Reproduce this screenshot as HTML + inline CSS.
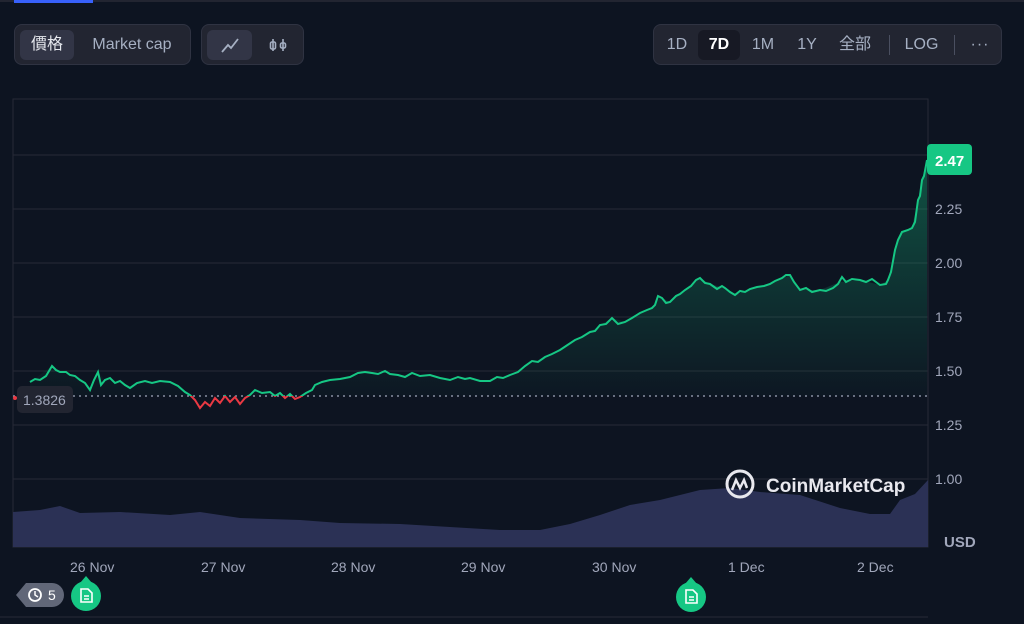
<!DOCTYPE html>
<html><head><meta charset="utf-8"><style>
body{margin:0;width:1024px;height:624px;background:#0d1421;font-family:"Liberation Sans","Noto Sans CJK JP",sans-serif;overflow:hidden;position:relative;color:#a1a7bb}
.grp{position:absolute;top:24px;height:41px;background:#222531;border:1px solid #2f3342;border-radius:8px;box-sizing:border-box}
.b{position:absolute;top:5px;height:30px;line-height:30px;font-size:16px;color:#a6b0c3;border-radius:6px;text-align:center}
.on{background:#323546;color:#e6e8ee}
.on2{background:#171924;color:#fff;font-weight:bold}
.sep{position:absolute;top:10px;width:1px;height:20px;background:#4a4f60}
</style></head><body>
<div style="position:absolute;left:0;top:0;width:1024px;height:2px;background:#222531"></div>
<div style="position:absolute;left:14px;top:0;width:79px;height:3px;background:#3861fb"></div>
<div class="grp" style="left:14px;width:177px"><div class="b on" style="left:5px;width:54px">價格</div><div class="b" style="left:62px;width:110px">Market cap</div></div>
<div class="grp" style="left:201px;width:103px"><div class="b on" style="left:5px;width:45px"><svg width="26" height="30" viewBox="0 0 26 30"><path d="M5 22l6-7 3 3 7-9" fill="none" stroke="#a6b0c3" stroke-width="1.8"/></svg></div><div class="b" style="left:55px;width:42px"><svg width="22" height="30" viewBox="0 0 22 30"><path d="M6 9v12M16 9v12" stroke="#a6b0c3" stroke-width="1.6"/><rect x="3.5" y="12" width="5" height="7" rx="1.5" fill="none" stroke="#a6b0c3" stroke-width="1.6"/><rect x="13.5" y="13" width="5" height="5" rx="1.5" fill="none" stroke="#a6b0c3" stroke-width="1.6"/></svg></div></div>
<div class="grp" style="left:653px;width:349px">
<div class="b" style="left:4px;width:38px">1D</div>
<div class="b on2" style="left:44px;width:42px">7D</div>
<div class="b" style="left:89px;width:40px">1M</div>
<div class="b" style="left:134px;width:38px">1Y</div>
<div class="b" style="left:176px;width:50px">全部</div>
<div class="sep" style="left:235px"></div>
<div class="b" style="left:240px;width:55px">LOG</div>
<div class="sep" style="left:300px"></div>
<div class="b" style="left:306px;width:40px;letter-spacing:1px">···</div>
</div>

<svg style="position:absolute;left:0;top:0" width="1024" height="624">
<defs>
<linearGradient id="g" x1="0" y1="0" x2="0" y2="1"><stop offset="0" stop-color="#16c784" stop-opacity="0.35"/><stop offset="1" stop-color="#16c784" stop-opacity="0"/></linearGradient>
<clipPath id="up"><rect x="0" y="0" width="1024" height="396"/></clipPath>
<clipPath id="dn"><rect x="0" y="396" width="1024" height="200"/></clipPath>
</defs>
<rect x="13" y="99" width="915" height="448" fill="none" stroke="#262a36"/>
<g stroke="#262a36" stroke-width="1">
<line x1="13" y1="155" x2="928" y2="155"/><line x1="13" y1="209" x2="928" y2="209"/><line x1="13" y1="263" x2="928" y2="263"/><line x1="13" y1="317" x2="928" y2="317"/><line x1="13" y1="371" x2="928" y2="371"/><line x1="13" y1="425" x2="928" y2="425"/><line x1="13" y1="479" x2="928" y2="479"/>
</g>
<path d="M13 512L40 510L60 506L80 513L120 512L170 515L200 512L240 518L300 520L340 523L400 524L450 527L500 530L540 530L570 524L600 515L630 505L660 500L700 490L730 488L760 492L800 495L840 508L870 514L890 514L900 500L915 494L928 480L928 547L13 547Z" fill="#2b3155"/>
<path id="p" d="M30 382L35 379L40 380L46 376L52 366L56 370L60 372L66 372L70 375L75 376L80 380L85 383L90 390L94 380L98 372L101 385L105 380L110 378L115 383L120 381L125 385L130 388L137 383L145 381L152 383L160 381L170 382L178 386L185 392L190 395L195 400L200 408L205 402L210 406L215 398L220 403L225 396L230 402L235 397L240 404L245 398L250 395L255 390L262 393L270 392L275 396L280 393L285 398L290 394L295 399L300 397L306 393L312 390L315 385L322 382L330 380L340 379L350 377L358 373L365 372L372 373L378 374L385 371L390 374L398 375L405 377L412 373L420 376L430 375L440 378L450 380L458 377L465 379L470 378L480 381L490 381L497 377L503 378L510 375L518 372L525 366L532 361L538 362L545 357L552 354L560 350L566 346L575 340L582 337L590 332L595 331L600 325L606 324L612 318L618 324L625 322L632 318L640 313L647 310L652 308L655 305L658 296L662 298L666 303L670 302L676 296L680 294L685 290L691 286L696 280L700 278L705 283L710 284L717 289L722 286L725 288L730 292L735 295L740 291L745 292L750 289L757 287L764 286L770 284L775 281L782 278L786 275L790 275L794 282L800 290L806 288L812 292L820 290L826 291L833 288L838 284L842 277L846 282L852 279L860 280L866 282L872 279L880 285L886 284L888 280L891 272L895 250L898 240L902 232L908 230L912 228L915 222L918 200L920 196L922 180L924 176L927 160" fill="none"/>
<path d="M30 382L52 366L60 372L75 376L90 390L98 372L105 380L120 381L130 388L145 381L170 382L185 392L200 408L215 398L230 402L245 398L255 390L270 392L285 398L300 397L315 385L330 380L350 377L370 372L390 374L410 377L430 375L450 380L470 378L490 381L510 375L525 366L545 357L560 350L575 340L590 332L600 325L612 318L625 322L640 313L655 305L660 297L670 302L685 290L700 278L710 284L725 288L735 295L750 289L770 284L790 275L800 290L820 290L840 282L860 280L880 285L888 280L895 250L902 232L912 228L918 200L922 180L927 160L927 396L30 396Z" fill="url(#g)" clip-path="url(#up)"/>
<line x1="13" y1="396" x2="928" y2="396" stroke="#a1a7bb" stroke-dasharray="2 4" stroke-width="1.3"/>
<use href="#p" stroke="#16c784" stroke-width="2" clip-path="url(#up)"/>
<use href="#p" stroke="#ea3943" stroke-width="2" clip-path="url(#dn)"/>
<circle cx="740" cy="484" r="13" fill="none" stroke="#e8e8ee" stroke-width="3"/>
<path d="M732 490l4-10 4 8 4-8 3 8" fill="none" stroke="#e8e8ee" stroke-width="2.5"/>
<text x="766" y="492" font-family="Liberation Sans,sans-serif" font-size="19" font-weight="bold" fill="#e8e8ee">CoinMarketCap</text>
<g font-family="Liberation Sans,sans-serif" font-size="14" fill="#a1a7bb">
<text x="935" y="214">2.25</text><text x="935" y="268">2.00</text><text x="935" y="322">1.75</text><text x="935" y="376">1.50</text><text x="935" y="430">1.25</text><text x="935" y="484">1.00</text>
<text x="944" y="547" font-weight="bold" font-size="15">USD</text>
<text x="70" y="572">26 Nov</text><text x="201" y="572">27 Nov</text><text x="331" y="572">28 Nov</text><text x="461" y="572">29 Nov</text><text x="592" y="572">30 Nov</text><text x="728" y="572">1 Dec</text><text x="857" y="572">2 Dec</text>
</g>
<rect x="927" y="144" width="45" height="31" rx="4" fill="#16c784"/>
<text x="935" y="166" font-family="Liberation Sans,sans-serif" font-size="15" font-weight="bold" fill="#fff">2.47</text>
<rect x="17" y="386" width="56" height="27" rx="5" fill="#222531"/>
<text x="23" y="405" font-family="Liberation Sans,sans-serif" font-size="14" fill="#a1a7bb">1.3826</text>
<circle cx="15" cy="398" r="2" fill="#ea3943"/>
<path d="M16 595l10-12h26a12 12 0 0 1 0 24h-26z" fill="#616778"/>
<circle cx="35" cy="595" r="6" fill="none" stroke="#fff" stroke-width="1.8"/><path d="M35 591v4l3 2" stroke="#fff" stroke-width="1.5" fill="none"/>
<text x="48" y="600" font-family="Liberation Sans,sans-serif" font-size="14" fill="#fff">5</text>
<g fill="#16c784"><circle cx="86" cy="596" r="15"/><path d="M80 583l6-7 6 7z"/><circle cx="691" cy="597" r="15"/><path d="M685 584l6-7 6 7z"/></g>
<g fill="none" stroke="#fff" stroke-width="1.6"><path d="M81 589h7l4 4v9h-11z M84 596h5M84 599h5"/><path d="M686 590h7l4 4v9h-11z M689 597h5M689 600h5"/></g>
<line x1="0" y1="617" x2="928" y2="617" stroke="#262a36"/>
</svg>
</body></html>
